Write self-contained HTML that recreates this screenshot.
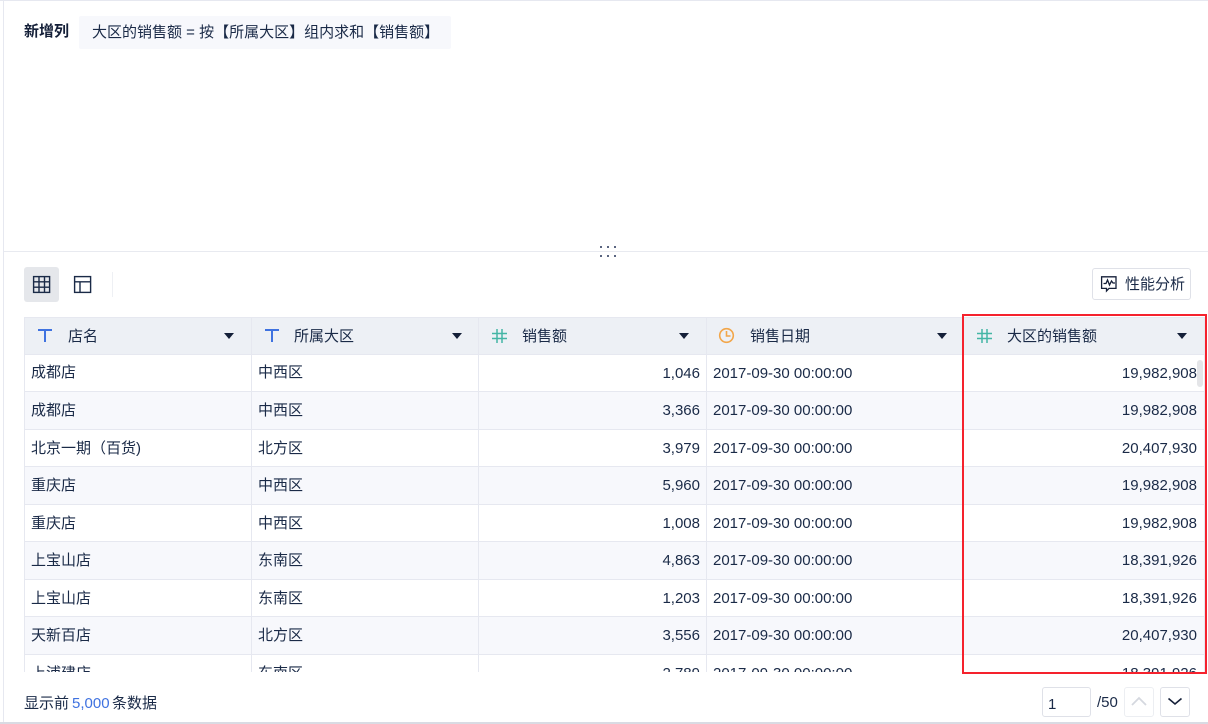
<!DOCTYPE html>
<html lang="zh"><head><meta charset="utf-8"><style>
html,body{margin:0;padding:0;background:#fff}
body{width:1208px;height:724px;position:relative;overflow:hidden;font:15px/20px "Liberation Sans","Noto Sans CJK SC",sans-serif;color:#1a2a47}
.a{position:absolute}
.t{position:absolute;white-space:nowrap}
.cell{position:absolute;white-space:nowrap;line-height:20px;margin-top:1px}
.tri{position:absolute;top:333px;width:0;height:0;border-left:5px solid transparent;border-right:5px solid transparent;border-top:6px solid #141f38}
svg{position:absolute;overflow:visible}
</style></head><body>
<div class="a" style="left:0;top:0;width:1208px;height:1px;background:#e6e8f0"></div>
<div class="a" style="left:3px;top:0;width:1px;height:722px;background:#e6e8f0"></div>
<div class="a" style="left:0;top:722px;width:1208px;height:2px;background:#d9dbe3"></div>

<div class="t" style="left:24px;top:22px;font-weight:bold;color:#141f38">新增列</div>
<div class="a" style="left:79px;top:16px;width:372px;height:33px;background:#f7f8fc;border-radius:2px"></div>
<div class="t" style="left:92px;top:23px">大区的销售额 = 按【所属大区】组内求和【销售额】</div>

<div class="a" style="left:4px;top:251px;width:1204px;height:1px;background:#e8eaf0"></div>
<svg style="left:600px;top:246px" width="18" height="12"><g fill="#5a6580"><rect x="0" y="0" width="2" height="2"/><rect x="7" y="0" width="2" height="2"/><rect x="14" y="0" width="2" height="2"/><rect x="0" y="9" width="2" height="2"/><rect x="7" y="9" width="2" height="2"/><rect x="14" y="9" width="2" height="2"/></g></svg>

<div class="a" style="left:24px;top:267px;width:35px;height:35px;background:#e5e7eb;border-radius:3px"></div>
<svg style="left:33px;top:276px" width="18" height="17" fill="none" stroke="#1a2a47" stroke-width="1.4"><rect x=".6" y=".6" width="16" height="15.8"/><path d="M6 .6V16.4M11.5 .6V16.4M.6 5.8H16.6M.6 11.2H16.6"/></svg>
<svg style="left:74px;top:276px" width="18" height="17" fill="none" stroke="#1a2a47" stroke-width="1.4"><rect x=".6" y=".6" width="16" height="15.8"/><path d="M.6 5.8H16.6M6 5.8V16.4"/></svg>
<div class="a" style="left:112px;top:272px;width:1px;height:25px;background:#eef0f4"></div>

<div class="a" style="left:1092px;top:268px;width:99px;height:32px;box-sizing:border-box;border:1px solid #dfe1e8;border-radius:3px;background:#fff"></div>
<svg style="left:1101px;top:276px" width="16" height="16" fill="none" stroke="#141f38" stroke-width="1.3"><path d="M.6 .8H15V12.4H8L5.5 15V12.4H.6Z"/><path d="M2.5 7.5L5 7.5L6.5 4L8.5 9L10.5 5L12 7H14"/></svg>
<div class="t" style="left:1125px;top:275px">性能分析</div>

<!-- table -->
<div class="a" style="left:24px;top:317px;width:1181px;height:355px;overflow:hidden" id="clip">
<div class="a" style="left:0;top:0;width:1181px;height:1px;background:#e6e8f0"></div>
<div class="a" style="left:0;top:1px;width:1181px;height:36px;background:#edf0f5"></div>
<div class="a" style="left:0;top:37px;width:1181px;height:1px;background:#e6e8f0"></div>
<div class="a" style="left:0;top:74px;width:1181px;height:37.5px;background:#f7f8fc"></div>
<div class="a" style="left:0;top:149px;width:1181px;height:37.5px;background:#f7f8fc"></div>
<div class="a" style="left:0;top:224px;width:1181px;height:37.5px;background:#f7f8fc"></div>
<div class="a" style="left:0;top:299px;width:1181px;height:37.5px;background:#f7f8fc"></div>
<div class="a" style="left:0;top:74px;width:1181px;height:1px;background:#e6e8f0"></div>
<div class="a" style="left:0;top:112px;width:1181px;height:1px;background:#e6e8f0"></div>
<div class="a" style="left:0;top:149px;width:1181px;height:1px;background:#e6e8f0"></div>
<div class="a" style="left:0;top:187px;width:1181px;height:1px;background:#e6e8f0"></div>
<div class="a" style="left:0;top:224px;width:1181px;height:1px;background:#e6e8f0"></div>
<div class="a" style="left:0;top:262px;width:1181px;height:1px;background:#e6e8f0"></div>
<div class="a" style="left:0;top:299px;width:1181px;height:1px;background:#e6e8f0"></div>
<div class="a" style="left:0;top:337px;width:1181px;height:1px;background:#e6e8f0"></div>
<div class="a" style="left:0;top:0;width:1px;height:355px;background:#e6e8f0"></div>
<div class="a" style="left:227px;top:0;width:1px;height:355px;background:#e6e8f0"></div>
<div class="a" style="left:454px;top:0;width:1px;height:355px;background:#e6e8f0"></div>
<div class="a" style="left:682px;top:0;width:1px;height:355px;background:#e6e8f0"></div>
<div class="a" style="left:938px;top:0;width:1px;height:355px;background:#e6e8f0"></div>
<div class="a" style="left:1180px;top:0;width:1px;height:355px;background:#e6e8f0"></div>

<div class="cell" style="left:7px;top:45px">成都店</div><div class="cell" style="left:234px;top:45px">中西区</div><div class="cell" style="right:505px;top:46px">1,046</div><div class="cell" style="left:689px;top:46px">2017-09-30 00:00:00</div><div class="cell" style="right:8px;top:46px">19,982,908</div>
<div class="cell" style="left:7px;top:83px">成都店</div><div class="cell" style="left:234px;top:83px">中西区</div><div class="cell" style="right:505px;top:83px">3,366</div><div class="cell" style="left:689px;top:83px">2017-09-30 00:00:00</div><div class="cell" style="right:8px;top:83px">19,982,908</div>
<div class="cell" style="left:7px;top:121px">北京一期（百货)</div><div class="cell" style="left:234px;top:121px">北方区</div><div class="cell" style="right:505px;top:121px">3,979</div><div class="cell" style="left:689px;top:121px">2017-09-30 00:00:00</div><div class="cell" style="right:8px;top:121px">20,407,930</div>
<div class="cell" style="left:7px;top:158px">重庆店</div><div class="cell" style="left:234px;top:158px">中西区</div><div class="cell" style="right:505px;top:158px">5,960</div><div class="cell" style="left:689px;top:158px">2017-09-30 00:00:00</div><div class="cell" style="right:8px;top:158px">19,982,908</div>
<div class="cell" style="left:7px;top:196px">重庆店</div><div class="cell" style="left:234px;top:196px">中西区</div><div class="cell" style="right:505px;top:196px">1,008</div><div class="cell" style="left:689px;top:196px">2017-09-30 00:00:00</div><div class="cell" style="right:8px;top:196px">19,982,908</div>
<div class="cell" style="left:7px;top:233px">上宝山店</div><div class="cell" style="left:234px;top:233px">东南区</div><div class="cell" style="right:505px;top:233px">4,863</div><div class="cell" style="left:689px;top:233px">2017-09-30 00:00:00</div><div class="cell" style="right:8px;top:233px">18,391,926</div>
<div class="cell" style="left:7px;top:271px">上宝山店</div><div class="cell" style="left:234px;top:271px">东南区</div><div class="cell" style="right:505px;top:271px">1,203</div><div class="cell" style="left:689px;top:271px">2017-09-30 00:00:00</div><div class="cell" style="right:8px;top:271px">18,391,926</div>
<div class="cell" style="left:7px;top:308px">天新百店</div><div class="cell" style="left:234px;top:308px">北方区</div><div class="cell" style="right:505px;top:308px">3,556</div><div class="cell" style="left:689px;top:308px">2017-09-30 00:00:00</div><div class="cell" style="right:8px;top:308px">20,407,930</div>
<div class="cell" style="left:7px;top:346px">上浦建店</div><div class="cell" style="left:234px;top:346px">东南区</div><div class="cell" style="right:505px;top:346px">2,789</div><div class="cell" style="left:689px;top:346px">2017-09-30 00:00:00</div><div class="cell" style="right:8px;top:346px">18,391,926</div>
<div class="a" style="left:1173px;top:43px;width:6px;height:27px;background:#e4e5e8;border-radius:3px"></div>
</div>

<svg style="left:38px;top:329px" width="14" height="14" fill="none" stroke="#3f72e0" stroke-width="2"><path d="M0 1H14M7 1V13"/></svg>
<div class="t" style="left:68px;top:327px">店名</div><div class="tri" style="left:224px"></div>
<svg style="left:265px;top:329px" width="14" height="14" fill="none" stroke="#3f72e0" stroke-width="2"><path d="M0 1H14M7 1V13"/></svg>
<div class="t" style="left:294px;top:327px">所属大区</div><div class="tri" style="left:452px"></div>
<svg style="left:492px;top:329px" width="15" height="14" fill="none" stroke="#44b5a5" stroke-width="1.5"><path d="M5 0V14M10 0V14M0 4.5H15M0 9.5H15"/></svg>
<div class="t" style="left:522px;top:327px">销售额</div><div class="tri" style="left:679px"></div>
<svg style="left:719px;top:328px" width="15" height="15" fill="none" stroke="#f2a64a" stroke-width="1.6"><circle cx="7.5" cy="7.5" r="6.8"/><path d="M7.5 3V8H11.5"/></svg>
<div class="t" style="left:750px;top:327px">销售日期</div><div class="tri" style="left:937px"></div>
<svg style="left:977px;top:329px" width="15" height="14" fill="none" stroke="#44b5a5" stroke-width="1.5"><path d="M5 0V14M10 0V14M0 4.5H15M0 9.5H15"/></svg>
<div class="t" style="left:1007px;top:327px">大区的销售额</div><div class="tri" style="left:1177px"></div>

<div class="a" style="left:962px;top:314px;width:245px;height:360px;box-sizing:border-box;border:2px solid #f5222d"></div>

<div class="t" style="left:24px;top:694px">显示前</div>
<div class="t" style="left:72px;top:694px;color:#3f72e0">5,000</div>
<div class="t" style="left:112px;top:694px">条数据</div>
<div class="a" style="left:1042px;top:687px;width:49px;height:30px;box-sizing:border-box;border:1px solid #dfe1e8;border-radius:3px"></div>
<div class="t" style="left:1048px;top:695px">1</div>
<div class="t" style="left:1097px;top:693px">/50</div>
<div class="a" style="left:1124px;top:687px;width:30px;height:30px;box-sizing:border-box;border:1px solid #eceef2;border-radius:3px"></div>
<svg style="left:1132px;top:697px" width="14" height="9" fill="none" stroke="#d5d8df" stroke-width="1.8"><path d="M0 8L7 1L14 8"/></svg>
<div class="a" style="left:1160px;top:687px;width:30px;height:30px;box-sizing:border-box;border:1px solid #dfe1e8;border-radius:3px"></div>
<svg style="left:1168px;top:698px" width="14" height="7" fill="none" stroke="#141f38" stroke-width="1.6"><path d="M.5 .5L7 6L13.5 .5"/></svg>
</body></html>
